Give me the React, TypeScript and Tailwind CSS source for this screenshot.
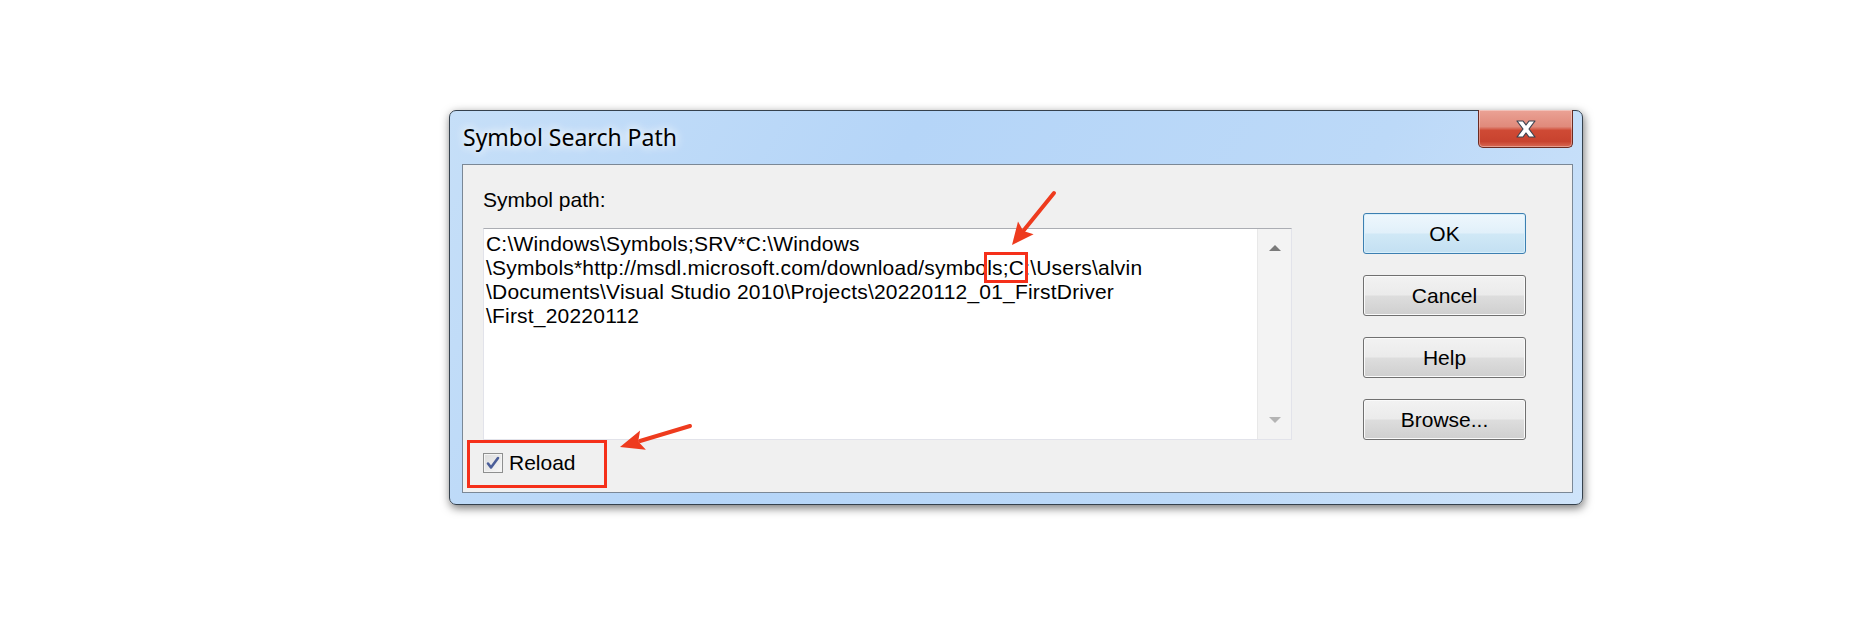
import { ReactNode } from 'react';

const DialogButton = ({ children, primary }: { children: ReactNode; primary?: boolean }) => (
  <button
    className={
      primary
        ? 'flex h-[41px] w-[163px] items-center justify-center rounded-[3px] border border-[#3c7fb1] bg-[linear-gradient(#eef7fd_0%,#e1f0fa_48%,#d0e8f6_52%,#c3e0f2_100%)] text-[21px] leading-none text-black shadow-[inset_0_0_0_1px_#d8effb]'
        : 'flex h-[41px] w-[163px] items-center justify-center rounded-[3px] border border-[#707070] bg-[linear-gradient(#f2f2f2_0%,#ebebeb_48%,#dddddd_52%,#cfcfcf_100%)] text-[21px] leading-none text-black shadow-[inset_0_0_0_1px_#fafafa]'
    }
  >
    {children}
  </button>
);

export default function App() {
  return (
    <div className="relative flex h-[642px] w-[1860px] bg-white pl-[449px] pt-[110px] font-['Liberation_Sans',Arial,sans-serif]">
      <div className="flex h-[395px] w-[1134px] flex-col rounded-[7px] border border-[#35414d] bg-[linear-gradient(120deg,#c6dff8_0%,#b5d5f8_35%,#bcd9f8_70%,#cfe4fa_100%)] shadow-[1px_3px_10px_rgba(0,0,0,0.55)]">
        {/* title bar */}
        <div className="flex h-[53px] items-start justify-between">
          <span className="pl-[13px] pt-[11px] font-['Noto_Sans',sans-serif] text-[23px] leading-[30px] text-black [text-shadow:0_0_12px_#ffffff,0_0_8px_#ffffff]">
            Symbol Search Path
          </span>
          <div className="mr-[9px] mt-[-1px] flex h-[38px] w-[95px] items-center justify-center rounded-b-[5px] border border-t-0 border-[#6b2b22] bg-[linear-gradient(#eba295_0%,#e08a7b_45%,#cf4a35_55%,#c8432f_85%,#d86a55_100%)] shadow-[inset_0_0_0_1px_rgba(255,255,255,0.35)]">
            <svg width="22" height="18" viewBox="0 0 22 18">
              <path
                d="M2 1h6l3 4 3-4h6l-6 8 6 8h-6l-3-4-3 4H2l6-8z"
                fill="#ffffff"
                stroke="#3b4250"
                strokeWidth="1.2"
                strokeLinejoin="round"
              />
            </svg>
          </div>
        </div>

        {/* client area */}
        <div className="ml-[12px] flex h-[329px] w-[1111px] border border-[#7b8896] bg-[#f0f0f0]">
          <div className="flex flex-col pl-[20px] pt-[23px]">
            <span className="text-[21px] leading-[24px] text-black">Symbol path:</span>
            <div className="mt-[16px] flex h-[212px] w-[809px] border border-[#e2e3ea] border-t-[#abadb3] bg-white">
              <div className="flex-1 pl-[2px] pt-[3px] text-[21px] leading-[24px] tracking-[0.2px] text-black">
                <div className="whitespace-pre">C:\Windows\Symbols;SRV*C:\Windows</div>
                <div className="whitespace-pre">
                  \Symbols*http://msdl.microsoft.com/download/symbo
                  <span className="relative">
                    ls;C
                    <span className="absolute -left-[3px] -right-[4px] -top-[4px] -bottom-[4px] border-[3px] border-[#f5301a]" />
                  </span>
                  :\Users\alvin
                </div>
                <div className="whitespace-pre">\Documents\Visual Studio 2010\Projects\20220112_01_FirstDriver</div>
                <div className="whitespace-pre">\First_20220112</div>
              </div>
              <div className="flex w-[34px] flex-col items-center justify-between border-l border-[#e8e8e8] bg-[#f3f3f3] py-[16px]">
                <div className="h-0 w-0 border-x-[6px] border-b-[6px] border-x-transparent border-b-[#7a7a7a]" />
                <div className="h-0 w-0 border-x-[6px] border-t-[6px] border-x-transparent border-t-[#b4b4b4]" />
              </div>
            </div>
            <label className="mt-[13px] flex items-center gap-[6px]">
              <span className="flex h-[20px] w-[20px] items-center justify-center border border-[#8e8f8f] bg-[linear-gradient(135deg,#dcdcdc,#f7f7f7)] shadow-[inset_0_0_0_1px_#f4f4f4]">
                <svg width="14" height="14" viewBox="0 0 14 14">
                  <path d="M2 7.5l3 4L12 2" fill="none" stroke="#4b5e99" strokeWidth="2.6" strokeLinecap="round" strokeLinejoin="round" />
                </svg>
              </span>
              <span className="text-[21px] leading-[20px] text-black">Reload</span>
            </label>
          </div>

          <div className="ml-[71px] flex flex-col gap-[21px] pt-[48px]">
            <DialogButton primary>OK</DialogButton>
            <DialogButton>Cancel</DialogButton>
            <DialogButton>Help</DialogButton>
            <DialogButton>Browse...</DialogButton>
          </div>
        </div>
      </div>

      {/* annotations */}
      <div className="absolute left-[467px] top-[440px] h-[48px] w-[140px] border-[3px] border-[#f5301a]" />
      <svg className="pointer-events-none absolute left-0 top-0" width="1860" height="642">
        <line x1="1054" y1="193" x2="1024" y2="230" stroke="#ee3b1e" strokeWidth="4" strokeLinecap="round" />
        <polygon points="1012,245 1033.6,234.2 1023.3,231 1018,221.6" fill="#ee3b1e" />
        <line x1="690" y1="426" x2="640" y2="441" stroke="#ee3b1e" strokeWidth="4" strokeLinecap="round" />
        <polygon points="620,447 645.9,449.7 638.2,441.5 640.1,430.5" fill="#ee3b1e" />
      </svg>
    </div>
  );
}
